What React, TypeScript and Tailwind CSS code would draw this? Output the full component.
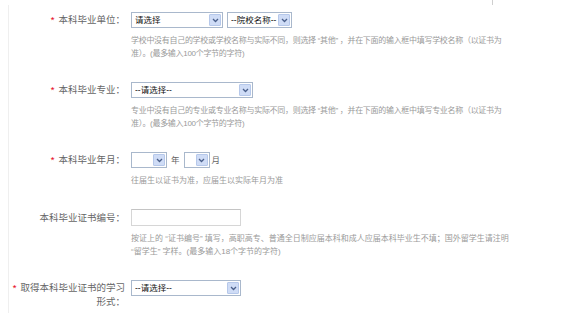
import React from "react";

const FONT = '"Liberation Sans", "Noto Sans CJK SC", sans-serif';

function Select({ w, text }: { w: string; text?: string }) {
  return (
    <div className={`${w} h-[16px] flex items-center border border-[#a9b8cc] bg-white pl-[3px] pr-[1px]`}>
      <span className="flex-1 text-[8.5px] leading-none text-[#111] whitespace-nowrap overflow-hidden">{text}</span>
      <span className="w-[12px] h-[12px] flex items-center justify-center bg-[#cfdcf6] border border-[#b6c8ea] rounded-[1px]">
        <svg width="7" height="5" viewBox="0 0 7 5">
          <path d="M1 1 L3.5 3.5 L6 1" fill="none" stroke="#4a5f8a" strokeWidth="1.3" />
        </svg>
      </span>
    </div>
  );
}

function Row({
  required,
  label,
  children,
  help,
  labelMt = "mt-[1px]",
  tight,
}: {
  required?: boolean;
  label: React.ReactNode;
  children: React.ReactNode;
  help?: string[];
  labelMt?: string;
  tight?: boolean;
}) {
  return (
    <div className="flex items-start">
      <div className={`w-[116px] shrink-0 text-right text-[9.5px] leading-[14px] text-[#666] ${labelMt}`}>
        {required && <span className="text-[#e60012] mr-[4px]">*</span>}
        {label}
      </div>
      <div className="ml-[6px]">
        <div className="flex items-center">{children}</div>
        {help && (
          <div
            className={`mt-[6px] text-[8px] leading-[13px] text-[#9a9a9a] whitespace-nowrap ${
              tight ? "tracking-[-0.3px]" : ""
            }`}
          >
            {help.map((line, i) => (
              <div key={i}>{line}</div>
            ))}
          </div>
        )}
      </div>
    </div>
  );
}

export default function App() {
  return (
    <div className="w-[562px] h-[324px] bg-white overflow-hidden" style={{ fontFamily: FONT }}>
      {/* top edge of the box above */}
      <div className="h-[5px] w-[493px] border-r border-[#cfcfcf]" />

      <div className="ml-[8px] border-l border-[#efefef] pt-[7px] pb-[4px] flex flex-col gap-[22px]">
        <Row
          required
          tight
          label="本科毕业单位："
          help={[
            "学校中没有自己的学校或学校名称与实际不同，则选择 “其他” ，并在下面的输入框中填写学校名称（以证书为",
            "准）。(最多输入100个字节的字符)",
          ]}
        >
          <Select w="w-[92px]" text="请选择" />
          <div className="w-[4px]" />
          <Select w="w-[65px]" text="--院校名称--" />
        </Row>

        <Row
          required
          tight
          label="本科毕业专业："
          help={[
            "专业中没有自己的专业或专业名称与实际不同，则选择 “其他” ，并在下面的输入框中填写专业名称（以证书为",
            "准）。(最多输入100个字节的字符)",
          ]}
        >
          <Select w="w-[122px]" text="--请选择--" />
        </Row>

        <Row required label="本科毕业年月：" help={["往届生以证书为准，应届生以实际年月为准"]}>
          <Select w="w-[36px]" />
          <span className="ml-[4px] mr-[4px] text-[8.5px] text-[#666]">年</span>
          <Select w="w-[26px]" />
          <span className="ml-[2px] text-[8.5px] text-[#666]">月</span>
        </Row>

        <Row
          label="本科毕业证书编号："
          labelMt="mt-[2px]"
          help={[
            "按证上的 “证书编号” 填写，高职高专、普通全日制应届本科和成人应届本科毕业生不填；国外留学生请注明",
            " “留学生” 字样。(最多输入18个字节的字符)",
          ]}
        >
          <div className="w-[110px] h-[17px] border border-[#d6d6d6] border-t-[#c4c4c4] bg-white" />
        </Row>

        <Row required label="取得本科毕业证书的学习形式：">
          <Select w="w-[110px]" text="--请选择--" />
        </Row>
      </div>
    </div>
  );
}
